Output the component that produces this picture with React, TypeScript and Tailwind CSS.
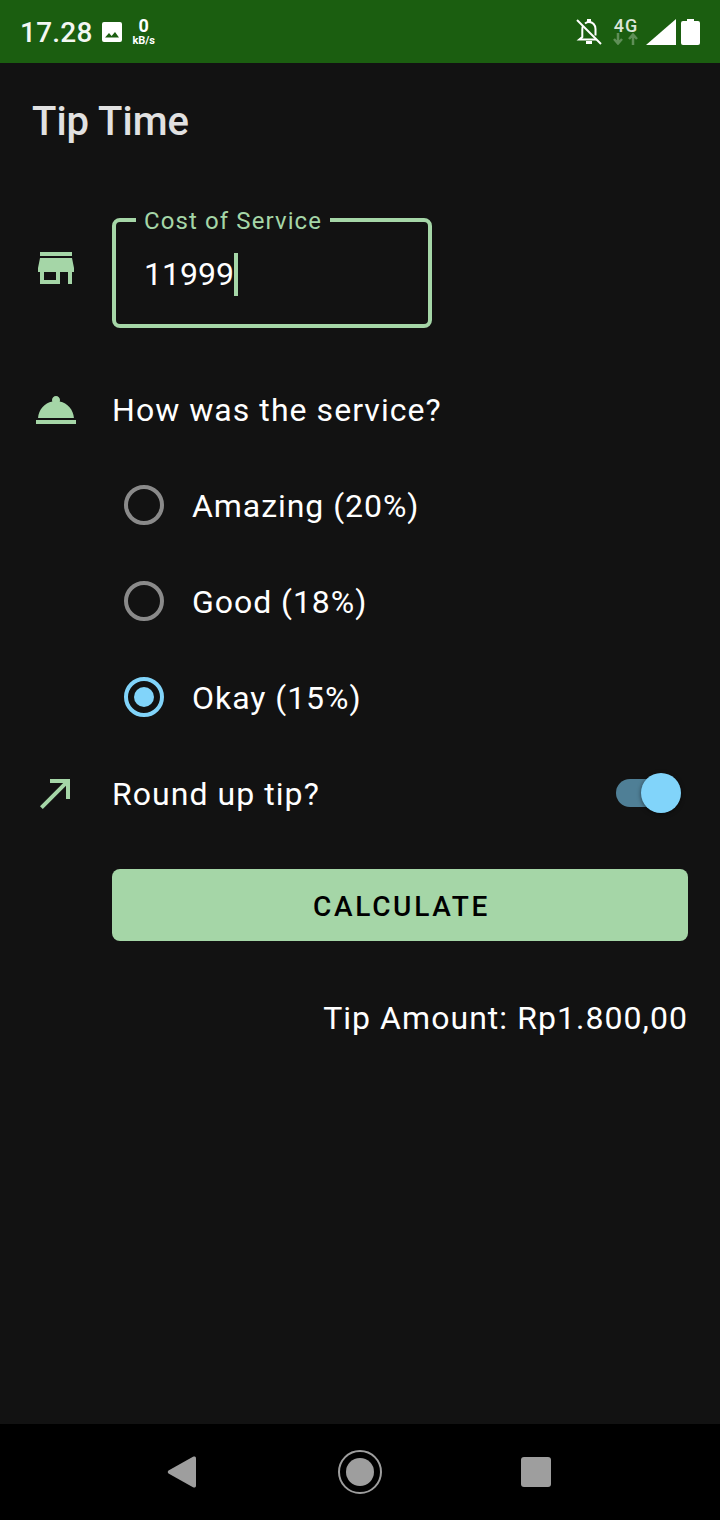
const green = "#a5d6a7";

const StatusBar = () => {
  return (
    <div className="h-[63px] shrink-0 bg-[#1b5e10] flex items-center justify-between pl-5 pr-5 text-white">
      <div className="flex items-center">
        <span className="pt-[2px] text-[28px] font-medium leading-none tracking-[0.25px] text-[#f4f7f3]">17.28</span>
        <svg className="ml-[9px] w-5 h-5" viewBox="0 0 20 20" fill="white">
          <path d="M2 0h16a2 2 0 0 1 2 2v16a2 2 0 0 1-2 2H2a2 2 0 0 1-2-2V2a2 2 0 0 1 2-2zM3 15.500h14l-4-5.500-3.400 4-2.600-3z" fillRule="evenodd" />
        </svg>
        <div className="ml-[11px] w-[22px] flex flex-col items-center font-bold">
          <span className="text-[18px] leading-[15px]">0</span>
          <span className="mt-[3px] text-[11px] leading-[9px] whitespace-nowrap">kB/s</span>
        </div>
      </div>
      <div className="flex items-center">
        <svg className="w-[26px] h-[26px]" viewBox="0 0 26 26" fill="none" stroke="white" strokeWidth="2">
          <path d="M1 1l24 24" />
          <path d="M7 7c-.5 1-.7 2-.7 3.500v7.500l-3 2.500h17M9 4.500c1.200-1 2.500-1.500 4-1.500 3.800 0 6.500 3 6.500 7v6.500" />
          <path d="M11 1.500h4M10 23.500h6" strokeWidth="3" />
        </svg>
        <div className="ml-[12px] w-6 flex flex-col items-center">
          <span className="text-[18px] leading-[15px] font-medium text-[#dce6da] tracking-[1px]">4G</span>
          <svg className="w-[26px] h-3" viewBox="0 0 26 12" fill="none" stroke="#5f8f57" strokeWidth="2.500">
            <path d="M5 0v10M1 6l4 4.500L9 6M20 12V2M16 6l4-4.500L24 6" />
          </svg>
        </div>
        <svg className="ml-2 w-[30px] h-[26px]" viewBox="0 0 30 26" fill="white">
          <path d="M30 0v26H0z" />
        </svg>
        <svg className="ml-[5px] w-[19px] h-[26px]" viewBox="0 0 19 26" fill="white">
          <path d="M6 0h7v2h4a2 2 0 0 1 2 2v20a2 2 0 0 1-2 2H2a2 2 0 0 1-2-2V4a2 2 0 0 1 2-2h4z" />
        </svg>
      </div>
    </div>
  );
};

const RadioRow: React.FC<{ label: string; checked?: boolean }> = ({ label, checked }) => {
  return (
    <div className="h-24 flex items-center pl-[92px]">
      <div
        className={
          checked
            ? "w-10 h-10 rounded-full border-4 border-[#81d4fa] flex items-center justify-center"
            : "w-10 h-10 rounded-full border-4 border-[#8a8a8a]"
        }
      >
        {checked && <div className="w-5 h-5 rounded-full bg-[#81d4fa]" />}
      </div>
      <span className="ml-7 pt-[2px] text-[32px] leading-none tracking-[0.95px] text-white">{label}</span>
    </div>
  );
};

const App = () => {
  return (
    <div
      className="w-[720px] h-[1520px] flex flex-col bg-[#121212]"
      style={{ fontFamily: "Roboto, sans-serif" }}
    >
      <StatusBar />
      <div className="flex-1 flex flex-col pl-8 pr-8">
        <div className="h-[118px] flex items-center text-[40px] font-medium text-[#e1e1e1]">
          Tip Time
        </div>

        <div className="mt-[37px] flex items-start">
          <svg className="mt-[26px] w-12 h-12 shrink-0" viewBox="0 0 24 24" fill={green}>
            <path d="M20 4H4v2h16V4zm1 10v-2l-1-5H4l-1 5v2h1v6h10v-6h4v6h2v-6h1zm-9 4H6v-4h6v4z" />
          </svg>
          <div className="ml-8 relative w-[320px] h-[110px] border-4 border-[#a5d6a7] rounded-lg pl-7 pt-[31px] flex items-start">
            <span className="absolute left-5 -top-[15px] bg-[#121212] px-2 text-[24px] leading-7 tracking-[1.1px] text-[#a5d6a7]">
              Cost of Service
            </span>
            <span className="text-[32px] leading-[43px] text-white">11999</span>
            <span className="w-1 h-[43px] bg-[#a5d6a7]" />
          </div>
        </div>

        <div className="mt-[50px] h-16 flex items-center">
          <svg className="w-12 h-12 shrink-0" viewBox="0 0 24 24" fill={green}>
            <path d="M2 17h20v2H2zm11.840-9.210c.1-.24.16-.51.16-.79 0-1.100-.9-2-2-2s-2 .9-2 2c0 .28.06.55.16.79C6.250 8.600 3.270 11.930 3.030 16h17.940c-.24-4.070-3.220-7.400-7.130-8.210z" />
          </svg>
          <span className="ml-8 text-[32px] leading-none tracking-[1.05px] text-white">How was the service?</span>
        </div>

        <div className="mt-[15px] flex flex-col">
          <RadioRow label="Amazing (20%)" />
          <RadioRow label="Good (18%)" />
          <RadioRow label="Okay (15%)" checked />
        </div>

        <div className="h-24 flex items-center">
          <svg className="w-12 h-12 shrink-0" viewBox="0 0 24 24" fill={green}>
            <path d="M9 5v2h6.590L4 18.590 5.410 20 17 8.410V15h2V5z" />
          </svg>
          <span className="ml-8 pt-[2px] text-[32px] leading-none tracking-[1.05px] text-white">Round up tip?</span>
          <div className="ml-auto mr-3 relative w-[60px] h-7 rounded-full bg-[#4f7f96]">
            <div className="absolute -right-[5px] -top-[6px] w-10 h-10 rounded-full bg-[#81d4fa] shadow-[0_1px_4px_rgba(0,0,0,0.5)]" />
          </div>
        </div>

        <button className="mt-7 ml-20 h-[72px] w-[576px] rounded-lg bg-[#a5d6a7] pl-[3px] pt-[3px] text-[28px] font-medium tracking-[2.7px] text-black">
          CALCULATE
        </button>

        <div className="mt-[53px] h-12 flex items-center justify-end text-[32px] tracking-[1.05px] text-white">
          Tip Amount: Rp1.800,00
        </div>
      </div>

      <div className="h-24 shrink-0 bg-black flex items-center">
        <svg className="ml-[167px] w-[30px] h-8" viewBox="0 0 30 32" fill="#9e9e9e">
          <path d="M1.500 14.500L26 .8c1.500-.8 3-.2 3 1.500v27.400c0 1.700-1.500 2.300-3 1.500L1.500 17.500c-1-.7-1-2.300 0-3z" />
        </svg>
        <div className="ml-[141px] w-11 h-11 rounded-full border-2 border-[#9e9e9e] flex items-center justify-center">
          <div className="w-7 h-7 rounded-full bg-[#9e9e9e]" />
        </div>
        <div className="ml-[139px] w-[30px] h-[30px] rounded-[3px] bg-[#9e9e9e]" />
      </div>
    </div>
  );
};

export default App;
